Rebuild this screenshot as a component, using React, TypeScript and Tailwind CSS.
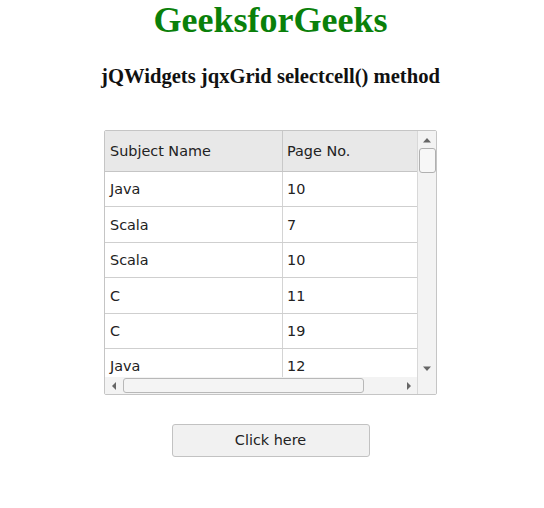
const rows: [string, string][] = [
  ['Java', '10'],
  ['Scala', '7'],
  ['Scala', '10'],
  ['C', '11'],
  ['C', '19'],
  ['Java', '12'],
];

export default function App() {
  return (
    <div className="flex w-[541px] min-h-[508px] flex-col items-center bg-white">
      <h1 className="font-['Liberation_Serif',serif] text-[36px] leading-[40px] font-bold text-[#0a800a]">
        GeeksforGeeks
      </h1>
      <h3 className="mt-[24px] font-['Liberation_Serif',serif] text-[20.6px] leading-[24px] font-bold text-[#111]">
        jQWidgets jqxGrid selectcell() method
      </h3>

      <div className="mt-[42px] flex h-[265px] w-[333px] overflow-hidden rounded-[2px] border border-[#c5c5c5] font-['DejaVu_Sans',sans-serif] text-[14.4px] text-[#222]">
        <div className="flex w-[312px] flex-col">
          <div className="flex h-[41px] shrink-0 border-b border-[#c5c5c5] bg-[#e8e8e8]">
            <div className="flex w-[178px] items-center border-r border-[#c8c8c8] pt-[1px] pl-[5px]">Subject Name</div>
            <div className="flex flex-1 items-center pt-[1px] pl-[4px]">Page No.</div>
          </div>
          <div className="h-[205px] shrink-0 overflow-hidden">
            {rows.map(([name, page], i) => (
              <div key={i} className="flex h-[35.4px] border-b border-[#cfcfcf]">
                <div className="flex w-[178px] items-center border-r border-[#d4d4d4] pt-[2px] pl-[5px]">{name}</div>
                <div className="flex flex-1 items-center pt-[2px] pl-[4px]">{page}</div>
              </div>
            ))}
          </div>
          <div className="flex h-[17px] shrink-0 items-center bg-[#f3f3f3]">
            <div className="flex w-[18px] justify-center">
              <svg width="5" height="8" viewBox="0 0 5 8">
                <path d="M4 0 L0 4 L4 8 Z" fill="#666" />
              </svg>
            </div>
            <div className="h-[15px] w-[241px] rounded-[3px] border border-[#b8b8b8] bg-[#f4f4f4]" />
            <div className="flex-1" />
            <div className="flex w-[18px] justify-center">
              <svg width="5" height="8" viewBox="0 0 5 8">
                <path d="M1 0 L5 4 L1 8 Z" fill="#666" />
              </svg>
            </div>
          </div>
        </div>
        <div className="flex w-[19px] flex-col border-l border-[#d8d8d8] bg-[#f3f3f3]">
          <div className="flex h-[17px] items-center justify-center pt-[1px]">
            <svg width="8" height="5" viewBox="0 0 8 5">
              <path d="M0 4.5 L4 0 L8 4.5 Z" fill="#666" />
            </svg>
          </div>
          <div className="mx-auto h-[25px] w-[17px] rounded-[3px] border border-[#b0b0b0] bg-[#f7f7f7]" />
          <div className="flex-1" />
          <div className="flex h-[17px] items-center justify-center">
            <svg width="8" height="5" viewBox="0 0 8 5">
              <path d="M0 0.5 L4 5 L8 0.5 Z" fill="#666" />
            </svg>
          </div>
          <div className="h-[17px]" />
        </div>
      </div>

      <button className="mt-[29px] h-[33px] w-[198px] rounded-[3px] border border-[#c2c2c2] bg-[#f1f1f1] font-['DejaVu_Sans',sans-serif] text-[14.4px] text-[#222]">
        Click here
      </button>
    </div>
  );
}
